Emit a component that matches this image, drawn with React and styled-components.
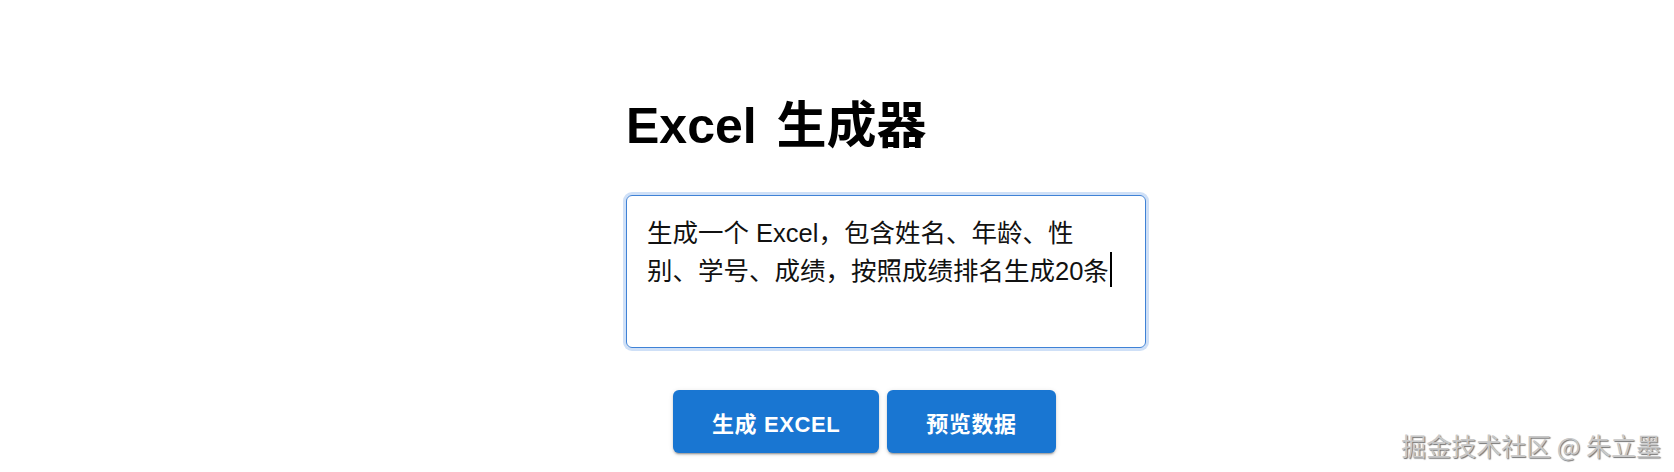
import React from "react";
import styled, { createGlobalStyle } from "styled-components";

const GlobalStyle = createGlobalStyle`
  html, body {
    margin: 0;
    padding: 0;
    background: #ffffff;
  }
  body {
    font-family: "Liberation Sans", "Noto Sans CJK SC", sans-serif;
    color: #000;
  }
`;

const Page = styled.div`
  position: relative;
  width: 1674px;
  height: 472px;
  box-sizing: border-box;
  padding: 96px 0 0 626px;
  display: flex;
  flex-direction: column;
  align-items: flex-start;
  overflow: hidden;
`;

const Title = styled.h1`
  margin: 0;
  font-family: "Liberation Sans", "Noto Sans CJK SC", sans-serif;
  font-size: 50px;
  font-weight: 700;
  line-height: 60px;
  height: 60px;
  word-spacing: 6px;
`;

const PromptBox = styled.div`
  margin-top: 39px;
  width: 520px;
  height: 153px;
  box-sizing: border-box;
  padding: 18px 20px;
  border: 1px solid #3f82d6;
  border-radius: 6px;
  box-shadow: 0 0 0 3px #cfe0f7;
  font-family: "Liberation Sans", "Noto Sans CJK SC", sans-serif;
  font-size: 25.5px;
  line-height: 38px;
  color: #111;
  white-space: nowrap;
`;

const Caret = styled.span`
  display: inline-block;
  width: 0;
  height: 35px;
  border-left: 2px solid #000;
  margin-left: 1px;
  vertical-align: -7px;
`;

const ButtonRow = styled.div`
  margin-top: 42px;
  margin-left: 47px;
  display: flex;
  gap: 8px;
`;

const Button = styled.button`
  height: 63px;
  padding: 0 39px;
  border: none;
  border-radius: 6px;
  background: #1976d2;
  color: #fff;
  font-family: "Liberation Sans", "Noto Sans CJK SC", sans-serif;
  font-size: 22px;
  font-weight: 600;
  letter-spacing: 0.6px;
  text-transform: uppercase;
  cursor: pointer;
  box-shadow: 0 3px 1px -2px rgba(0, 0, 0, 0.2), 0 2px 2px 0 rgba(0, 0, 0, 0.14),
    0 1px 5px 0 rgba(0, 0, 0, 0.12);
`;

const Watermark = styled.div`
  position: absolute;
  right: 13px;
  bottom: 12px;
  font-family: "Noto Sans CJK SC", "Liberation Sans", sans-serif;
  font-size: 25px;
  line-height: 30px;
  color: #c8c8c8;
  text-shadow: 1px 1px 1px rgba(0, 0, 0, 0.55), -0.5px -0.5px 0 #ffffff;
  white-space: nowrap;
`;

export default function App() {
  return (
    <>
      <GlobalStyle />
      <Page>
        <Title>Excel 生成器</Title>
        <PromptBox>
          生成一个 Excel，包含姓名、年龄、性
          <br />
          别、学号、成绩，按照成绩排名生成20条
          <Caret />
        </PromptBox>
        <ButtonRow>
          <Button>生成 Excel</Button>
          <Button>预览数据</Button>
        </ButtonRow>
        <Watermark>掘金技术社区 @ 朱立墨</Watermark>
      </Page>
    </>
  );
}
